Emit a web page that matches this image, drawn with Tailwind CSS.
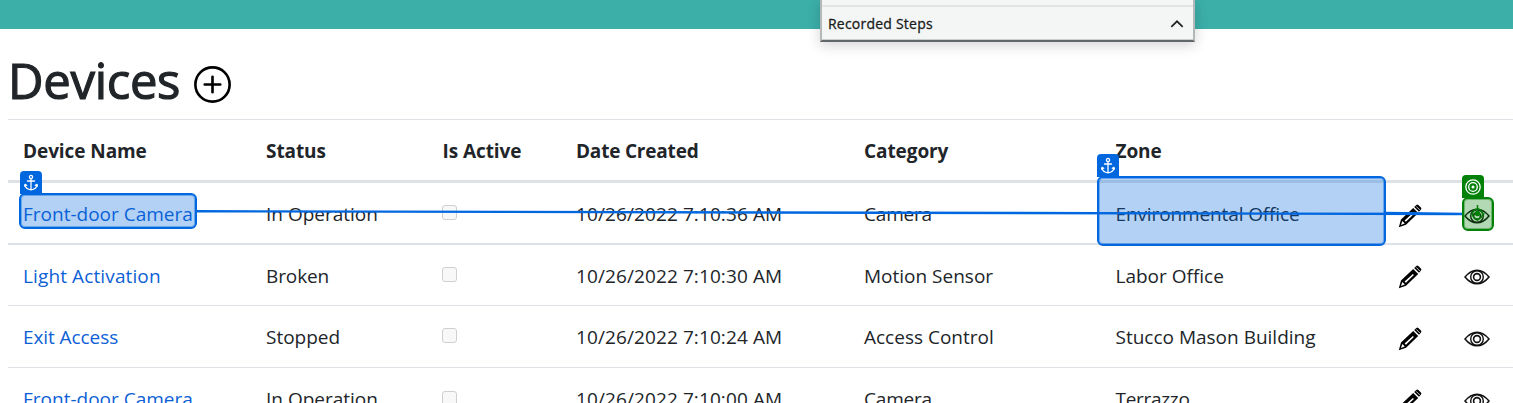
<!DOCTYPE html>
<html lang="en">
<head>
<meta charset="utf-8">
<title>Devices</title>
<script src="https://cdn.jsdelivr.net/npm/@tailwindcss/browser@4"></script>
</head>
<body class="relative h-[403px] w-[1513px] overflow-hidden bg-white font-['Open_Sans','Noto_Sans',sans-serif] text-[#212529]">
<svg class="hidden">
  <symbol id="pencil" viewBox="0 0 24 24">
    <path fill="#000" fill-rule="evenodd" d="M.8 23.2 3 15.6 15.2 3.9l5 5L8 20.7Z M2.900 21 6.800 19.600 4.400 17Z M6.600 16.400l1.300 1.300 8-7.800-1-1Z"/>
    <path fill="#000" d="M16.200 2.900 18.300.9q1-.8 2 .1l2.600 2.600q1 1 .1 2l-2 2.200Z"/>
    <path stroke="#fff" stroke-width=".8" d="m18.200 2.400 3.600 3.600"/>
  </symbol>
  <symbol id="eye" viewBox="0 0 26 16">
    <g fill="none" stroke="#111">
      <path stroke-width="1.500" d="M1 8Q6.500 1.200 13 1.200T25 8Q19.500 14.800 13 14.800T1 8Z"/>
      <circle cx="13" cy="8" r="6.300" stroke-width="1.400"/>
      <circle cx="13" cy="8" r="3.400" stroke-width="1.600"/>
    </g>
  </symbol>
  <symbol id="anchor" viewBox="0 0 16 18">
    <g fill="none" stroke="#fff" stroke-width="1.300" stroke-linecap="round" stroke-linejoin="round">
      <circle cx="8" cy="3" r="1.600"/>
      <path d="M8 4.800V15.600M4.500 7H11.500M2 10.500Q2.500 15.300 8 15.800Q13.500 15.300 14 10.500M1.600 12.200 2 10.300 3.700 11.300M14.400 12.200 14 10.300 12.300 11.300"/>
    </g>
  </symbol>
</svg>

<header class="h-[29px] bg-[#3cafa9]"></header>

<main class="h-[374px] overflow-hidden pl-2">
  <div class="flex h-[90px] items-center gap-[14px]">
    <h1 class="mt-[12px] w-[172px] text-[49px] leading-[60px] font-medium tracking-[-0.3px] whitespace-nowrap [-webkit-text-stroke:1.2px_#212529]">Devices</h1>
    <svg class="mt-[20px] size-[37px]" viewBox="0 0 38 38" fill="none" stroke="#000"><circle cx="19" cy="19" r="17.600" stroke-width="2.700"/><path stroke-width="2.700" stroke-linecap="round" d="M19 11v16M11 19h16"/></svg>
  </div>

  <div class="text-[19px] leading-[28px] whitespace-nowrap *:grid *:grid-cols-[243px_176.500px_133.500px_288px_251.500px_282.500px_130px] *:items-center *:*:pl-[15px]">
    <div class="h-[64px] border-t border-b-[3px] border-[#dee2e6] pt-[2px] font-bold tracking-[-0.08px]">
      <div>Device Name</div><div>Status</div><div>Is Active</div><div class="tracking-[-0.2px]">Date Created</div><div>Category</div><div>Zone</div><div></div>
    </div>
    <div class="h-[62px] border-b-2 border-[#dee2e6] pt-[2px]">
      <div class="text-[#0d5fd6]">Front-door Camera</div><div>In Operation</div><div><div class="mb-[3px] -ml-px size-[15px] rounded-[3px] border border-[#cfcfcf] bg-[#f8f8f8]"></div></div><div class="tracking-[0.1px]">10/26/2022 7:10:36 AM</div><div class="tracking-[-0.2px]">Camera</div><div class="tracking-[-0.12px]">Environmental Office</div>
      <div class="mt-[3px] flex items-center gap-[42px]"><svg class="size-6"><use href="#pencil"/></svg><svg class="h-4 w-[26px]"><use href="#eye"/></svg></div>
    </div>
    <div class="h-[61px] border-b border-[#dee2e6] pt-[2px]">
      <div class="tracking-[0.12px] text-[#0d5fd6]">Light Activation</div><div class="tracking-[-0.1px]">Broken</div><div><div class="mb-[3px] -ml-px size-[15px] rounded-[3px] border border-[#cfcfcf] bg-[#f8f8f8]"></div></div><div class="tracking-[0.1px]">10/26/2022 7:10:30 AM</div><div>Motion Sensor</div><div>Labor Office</div>
      <div class="mt-[2px] flex items-center gap-[42px]"><svg class="size-6"><use href="#pencil"/></svg><svg class="h-4 w-[26px]"><use href="#eye"/></svg></div>
    </div>
    <div class="h-[62px] border-b border-[#dee2e6]">
      <div class="tracking-[-0.08px] text-[#0d5fd6]">Exit Access</div><div>Stopped</div><div><div class="mb-[2px] -ml-px size-[15px] rounded-[3px] border border-[#cfcfcf] bg-[#f8f8f8]"></div></div><div class="tracking-[0.1px]">10/26/2022 7:10:24 AM</div><div>Access Control</div><div>Stucco Mason Building</div>
      <div class="mt-[4px] flex items-center gap-[42px]"><svg class="size-6"><use href="#pencil"/></svg><svg class="h-4 w-[26px]"><use href="#eye"/></svg></div>
    </div>
    <div class="h-[62px]">
      <div class="text-[#0d5fd6]">Front-door Camera</div><div>In Operation</div><div><div class="mb-[2px] -ml-px size-[15px] rounded-[3px] border border-[#cfcfcf] bg-[#f8f8f8]"></div></div><div class="tracking-[0.1px]">10/26/2022 7:10:00 AM</div><div class="tracking-[-0.2px]">Camera</div><div class="tracking-[-0.3px]">Terrazzo</div>
      <div class="mt-[4px] flex items-center gap-[42px]"><svg class="size-6"><use href="#pencil"/></svg><svg class="h-4 w-[26px]"><use href="#eye"/></svg></div>
    </div>
  </div>
</main>

<!-- Recorder panel -->
<div class="absolute top-0 left-[820px] h-[42px] w-[375px] border-x-2 border-b-2 border-x-[#b5b8b9] border-b-[#62676a] bg-[#f4f6f6] shadow-[0_3px_14px_rgba(0,0,0,0.18)]">
  <div class="mt-[5px] flex h-[35px] items-center justify-between border-t-2 border-b border-t-[#e3e5e5] border-b-[#cccfd0] pt-px pr-[9px] pl-[6px]">
    <span class="text-[14px] leading-5 font-medium tracking-[0.22px] text-[#1b1b1b] [-webkit-text-stroke:0.3px_#1b1b1b]">Recorded Steps</span>
    <svg class="h-2 w-[14px]" viewBox="0 0 14 8" fill="none" stroke="#222" stroke-width="1.700"><path d="M1.300 6.800 7 1.300l5.700 5.500"/></svg>
  </div>
</div>

<!-- Element highlights and connectors -->
<div class="absolute top-[193px] left-[19px] h-[36px] w-[178px] rounded-[6px] border-2 border-[#0067df] bg-[#0067df]/30 ring-1 ring-[#0067df]/40 ring-inset"></div>
<div class="absolute top-[171px] left-[20px] flex h-[23px] w-[22px] items-center justify-center rounded-t-[4px] bg-[#0067df]"><svg class="h-[18px] w-4"><use href="#anchor"/></svg></div>
<div class="absolute top-[176px] left-[1096.500px] h-[70px] w-[289px] rounded-[6px] border-2 border-[#0067df] bg-[#0067df]/30 ring-1 ring-[#0067df]/40 ring-inset"></div>
<div class="absolute top-[154px] left-[1097px] flex h-[23px] w-[22px] items-center justify-center rounded-t-[4px] bg-[#0067df]"><svg class="h-[18px] w-4"><use href="#anchor"/></svg></div>
<svg class="absolute top-0 left-0 h-[403px] w-[1513px]" fill="none" stroke="#0067df" stroke-width="2.400"><path d="M196 211.200 1462 214M1385 213 1462 214"/></svg>
<div class="absolute top-[197px] left-[1462px] h-[34px] w-[32px] rounded-[6px] border-2 border-[#038108] bg-[#038108]/30 ring-1 ring-[#038108]/40 ring-inset"></div>
<div class="absolute top-[175px] left-[1462px] flex h-[23px] w-[22px] items-center justify-center rounded-t-[4px] bg-[#038108]">
  <svg class="size-4" viewBox="0 0 16 16" fill="none" stroke="#fff" stroke-width="1.300"><circle cx="8" cy="8" r="7.200"/><circle cx="8" cy="8" r="4.300"/><circle cx="8" cy="8" r="1.500" fill="#fff" stroke="none"/></svg>
</div>
<svg class="absolute top-[204px] left-[1468px] size-5" viewBox="0 0 20 20" fill="none" stroke="#038108" stroke-width="1.500"><circle cx="9.500" cy="10" r="5"/><circle cx="9.500" cy="9.500" r="2" fill="#038108"/><path d="M9.500 1v4M9.500 15v2M2.500 10h2M14.500 10h2"/></svg>
</body>
</html>
